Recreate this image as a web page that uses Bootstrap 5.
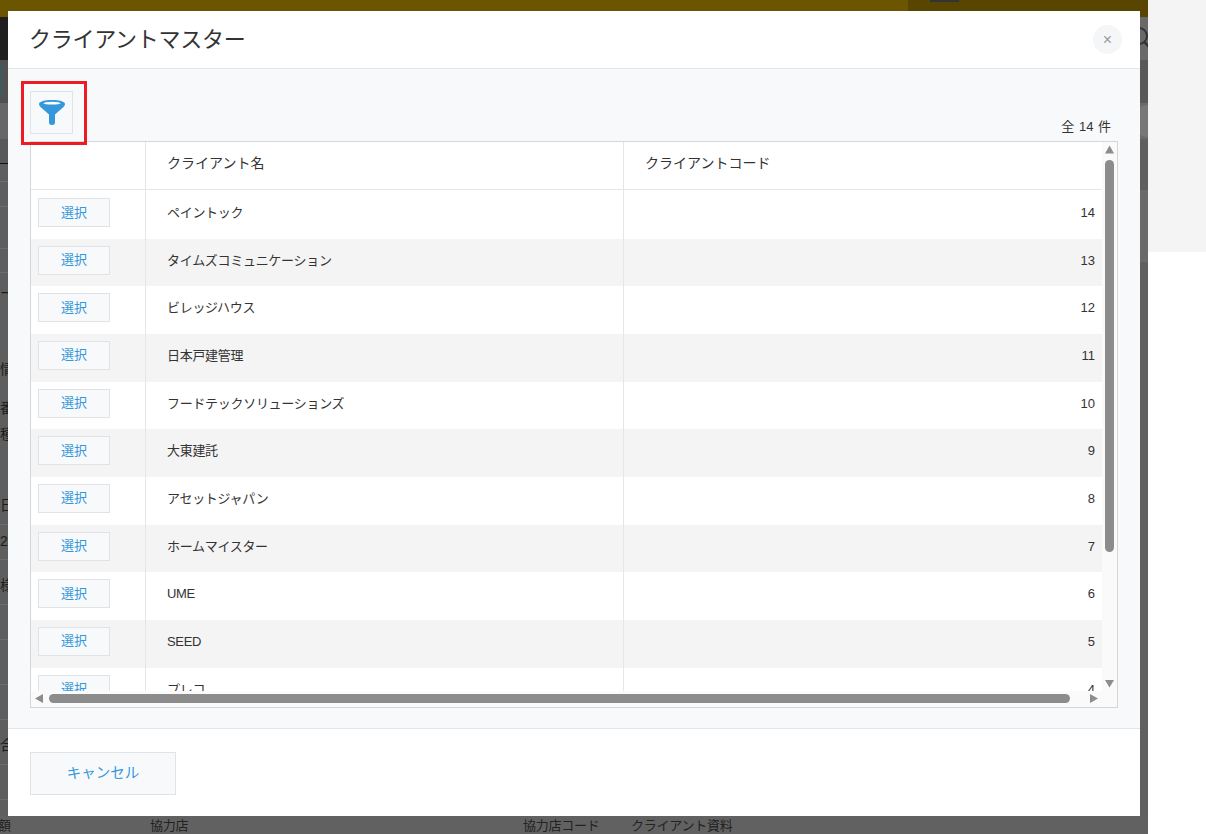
<!DOCTYPE html>
<html lang="ja">
<head>
<meta charset="utf-8">
<title>クライアントマスター</title>
<link href="https://cdn.jsdelivr.net/npm/bootstrap@5.3.0/dist/css/bootstrap.min.css" rel="stylesheet">
<style>
html,body{height:834px;overflow:hidden;background:#fff}
body{font-family:"Liberation Sans","Noto Sans CJK JP",sans-serif;font-size:13px;color:#333;position:relative}
.pg-wrap{width:1148px;height:834px}
.right-fill{position:absolute;left:1148px;top:0;width:58px;height:252px;background:#f4f4f4}
.topbar{height:17px}
.top-a{width:908px;background:#6b5500}
.top-b{background:#574500}
.top-tab{width:29px;height:2px;margin-left:22px;background:#333}
.mid{height:799px}
.lstrip,.rstrip{width:30px;overflow:hidden}
.band{color:#1c1c1c;font-size:14px;line-height:18px;white-space:nowrap}
.ln{border-bottom:1px solid #6e6e6e}
.lg{background:#5e5e5e}
.hh3{height:3px}.hh6{height:6px}.hh11{height:11px}.hh16{height:16px}.hh18{height:18px}.hh24{height:24px}.hh25{height:25px}.hh28{height:28px}.hh32{height:32px}.hh35{height:35px}.hh36{height:36px}.hh40{height:40px}.hh42{height:42px}.hh43{height:43px}.hh45{height:45px}.hh51{height:51px}.hh72{height:72px}.hh554{height:554px}
.l-dark{background:#1f1f1f}
.l-olive{background:linear-gradient(#3f5a5c,#3f5a5c) 0 5px/2px 32px no-repeat #4f5250}
.l-lite{background:#676767}
.l-mid{background:#595959}
.blk{border-bottom:1px solid #111}
.nudge{padding-top:6px}
.r-a{background:#696969}.r-b{background:#585858}.r-c{background:#6a6a6a}.r-d{background:#5f5f5f}.r-e{background:#606060}
.r-ring{width:32px;height:32px;border-radius:50%;background:#777;margin-right:-16px}
.botbar{height:18px;background:#616161;color:#222;font-size:13px;line-height:20px;white-space:nowrap;letter-spacing:-.25px}
.bt-a{width:152px;margin-left:-2px}
.bt-b{width:373px}
.bt-c{width:108px}
.mdl{position:absolute;left:8px;top:11px;width:1132px;height:805px}
.mdl .modal-content{height:100%;border:0;border-radius:0;background:#fff}
.mdl .modal-header{height:58px;padding:0 18px 0 21px;border-bottom:1px solid #e3e5e6;border-radius:0}
.ttl{font-size:22px;font-weight:400;line-height:30px;color:#333;margin:0;letter-spacing:-.25px}
.x-btn{width:29px;height:29px;border:0;border-radius:50%;background:#f5f6f8;color:#9a9a9a;font-size:16px;line-height:29px;padding:0}
.mdl .modal-body{padding:22px 22px 20px;background:#f7f9fb;flex:1 1 auto}
.tools{height:50px;position:relative}
.flt{width:43px;height:43px;padding:0;background:#f7f9fb;border:1px solid #e1e4e6;border-radius:0}
.red-box{position:absolute;left:-9px;top:-10px;width:66px;height:64px;border:3px solid #ed1c24;z-index:3;pointer-events:none}
.cnt{font-size:13px;line-height:18px;padding:0 7px 5px 0;color:#333;word-spacing:1px}
.tbl-box{width:1088px;height:567px;border:1px solid #d4d7da;background:#fafafa}
.tbl-view{width:1071px;height:549px;overflow:hidden;background:#fff}
.v-bar{width:15px;height:549px}
.h-bar{width:1071px;height:15px}
.sb-btn-v{height:18px}
.sb-btn-h{width:18px}
.v-thumb{width:9px;height:392px;margin-left:3px;background:#8c8c8c;border-radius:5px}
.h-thumb{width:1021px;height:9px;background:#8c8c8c;border-radius:5px}
.mtbl{width:1086px;table-layout:fixed;margin:0;border-collapse:separate;border-spacing:0;font-size:13px;color:#333}
.mtbl>*>*>*{padding:0;border:0;background:#fff;box-shadow:none;color:#333;vertical-align:top}
.mtbl .c1{width:115px}
.mtbl .c2,.mtbl .c3{width:478px}
.mtbl .c4{width:15px}
.mtbl thead th{height:49px;font-weight:400;font-size:14px;line-height:20px;padding:11px 0 0 21px;background:linear-gradient(#e6e6e6,#e6e6e6) left 47px/100% 1px no-repeat #fff}
.mtbl tbody td{height:47.67px;line-height:20px;padding:12px 0 0 21px;letter-spacing:-.3px}
.mtbl tbody tr:nth-child(even)>td{background:#f4f4f4}
.mtbl .c-line{border-right:1px solid #e6e6e6}
.mtbl .c-sel{padding:7px 0 0 7px!important;letter-spacing:0!important}
.mtbl .c-num{text-align:right;padding:12px 7px 0 0!important;letter-spacing:0!important}
.mtbl .c-end{padding:0!important}
.sel-btn{width:72px;height:29px;padding:0;background:#f7f9fa;border:1px solid #e1e4e6;border-radius:0;color:#3498db;font-size:13px;line-height:26px}
.mdl .modal-footer{height:88px;padding:23px 22px 0;border-top:1px solid #e3e5e6;justify-content:flex-start;align-items:flex-start;border-radius:0;background:#fff}
.cancel{width:146px;height:43px;margin:0;padding:1px 0 0;background:#f7f9fa;border:1px solid #e1e4e6;border-radius:0;color:#3498db;font-size:14.500px}
</style>
</head>
<body>
<div class="pg-wrap d-flex flex-column">
  <div class="topbar d-flex">
    <div class="top-a"></div>
    <div class="top-b flex-grow-1"><div class="top-tab"></div></div>
  </div>
  <div class="mid d-flex justify-content-between">
    <div class="lstrip">
      <div class="band hh43 l-dark"></div>
      <div class="band hh43 l-olive"></div>
      <div class="band hh36 l-lite"></div>
      <div class="band hh25 l-mid blk"></div>
      <div class="band hh18 lg ln"></div>
      <div class="band hh25 lg ln"></div>
      <div class="band hh42 lg ln"></div>
      <div class="band hh24 lg ln"></div>
      <div class="band hh40 lg d-flex align-items-center">ー</div>
      <div class="band hh42 lg"></div>
      <div class="band hh28 lg d-flex align-items-center">情報</div>
      <div class="band hh11 lg"></div>
      <div class="band hh28 lg d-flex align-items-center">番号</div>
      <div class="band hh24 lg d-flex align-items-center">種別</div>
      <div class="band hh45 lg"></div>
      <div class="band hh28 lg d-flex align-items-center">日付</div>
      <div class="band hh6 lg ln"></div>
      <div class="band hh32 lg d-flex align-items-center">2021</div>
      <div class="band hh3 lg ln"></div>
      <div class="band hh45 lg ln nudge d-flex align-items-center">様式</div>
      <div class="band hh35 lg ln"></div>
      <div class="band hh45 lg ln"></div>
      <div class="band hh35 lg ln"></div>
      <div class="band hh45 lg ln nudge d-flex align-items-center">合計</div>
      <div class="band hh35 lg ln"></div>
      <div class="band hh16 lg"></div>
    </div>
    <div class="rstrip">
      <div class="band hh43 r-a d-flex justify-content-end">
        <svg width="30" height="43" viewBox="0 0 30 43" aria-hidden="true"><circle cx="21" cy="19" r="8" fill="none" stroke="#333" stroke-width="2"/><path d="M26.500 25l4 4.500" stroke="#333" stroke-width="2.500"/></svg>
      </div>
      <div class="band hh43 r-b"></div>
      <div class="band hh36 r-c d-flex justify-content-end align-items-center"><div class="r-ring"></div></div>
      <div class="band hh51 r-d"></div>
      <div class="band hh72 r-a ln"></div>
      <div class="band hh554 r-e"></div>
    </div>
  </div>
  <div class="botbar d-flex">
    <div class="bt-a">額</div>
    <div class="bt-b">協力店</div>
    <div class="bt-c">協力店コード</div>
    <div>クライアント資料</div>
  </div>
</div>
<div class="right-fill"></div>

<div class="mdl">
  <div class="modal-content">
    <div class="modal-header d-flex justify-content-between align-items-center">
      <h5 class="ttl">クライアントマスター</h5>
      <button type="button" class="x-btn" aria-label="閉じる">×</button>
    </div>
    <div class="modal-body">
      <div class="tools d-flex justify-content-between align-items-start">
        <div class="position-relative">
          <button type="button" class="btn flt d-flex align-items-center justify-content-center" aria-label="絞り込み">
            <svg width="26" height="25" viewBox="0 0 26 25" aria-hidden="true">
              <path d="M0 4C0 1.500 6 0 13 0s13 1.500 13 4c0 1-.5 2-1.500 3L16 14.500v8a3 2.500 0 0 1-6 0v-8L1.500 7C.5 6 0 5 0 4z" fill="#3498db"/>
              <ellipse cx="13" cy="3.200" rx="8.500" ry="1.400" fill="#fff"/>
            </svg>
          </button>
          <div class="red-box"></div>
        </div>
        <div class="cnt align-self-end">全 14 件</div>
      </div>
      <div class="tbl-box d-flex flex-column">
        <div class="d-flex">
          <div class="tbl-view">
            <table class="table mtbl">
              <thead>
                <tr><th class="c1 c-line"></th><th class="c2 c-line">クライアント名</th><th class="c3">クライアントコード</th><th class="c4"></th></tr>
              </thead>
              <tbody>
                <tr><td class="c-line c-sel"><button class="btn sel-btn">選択</button></td><td class="c-line">ペイントック</td><td class="c-num">14</td><td class="c-end"></td></tr>
                <tr><td class="c-line c-sel"><button class="btn sel-btn">選択</button></td><td class="c-line">タイムズコミュニケーション</td><td class="c-num">13</td><td class="c-end"></td></tr>
                <tr><td class="c-line c-sel"><button class="btn sel-btn">選択</button></td><td class="c-line">ビレッジハウス</td><td class="c-num">12</td><td class="c-end"></td></tr>
                <tr><td class="c-line c-sel"><button class="btn sel-btn">選択</button></td><td class="c-line">日本戸建管理</td><td class="c-num">11</td><td class="c-end"></td></tr>
                <tr><td class="c-line c-sel"><button class="btn sel-btn">選択</button></td><td class="c-line">フードテックソリューションズ</td><td class="c-num">10</td><td class="c-end"></td></tr>
                <tr><td class="c-line c-sel"><button class="btn sel-btn">選択</button></td><td class="c-line">大東建託</td><td class="c-num">9</td><td class="c-end"></td></tr>
                <tr><td class="c-line c-sel"><button class="btn sel-btn">選択</button></td><td class="c-line">アセットジャパン</td><td class="c-num">8</td><td class="c-end"></td></tr>
                <tr><td class="c-line c-sel"><button class="btn sel-btn">選択</button></td><td class="c-line">ホームマイスター</td><td class="c-num">7</td><td class="c-end"></td></tr>
                <tr><td class="c-line c-sel"><button class="btn sel-btn">選択</button></td><td class="c-line">UME</td><td class="c-num">6</td><td class="c-end"></td></tr>
                <tr><td class="c-line c-sel"><button class="btn sel-btn">選択</button></td><td class="c-line">SEED</td><td class="c-num">5</td><td class="c-end"></td></tr>
                <tr><td class="c-line c-sel"><button class="btn sel-btn">選択</button></td><td class="c-line">プレコ</td><td class="c-num">4</td><td class="c-end"></td></tr>
              </tbody>
            </table>
          </div>
          <div class="v-bar d-flex flex-column">
            <svg class="sb-btn-v" width="15" height="18" viewBox="0 0 15 18" aria-hidden="true"><path d="M7.500 3.500L12 11.500H3z" fill="#8c8c8c"/></svg>
            <div class="v-thumb"></div>
            <svg class="sb-btn-v mt-auto" width="15" height="18" viewBox="0 0 15 18" aria-hidden="true"><path d="M3 7h9l-4.500 7.500z" fill="#8c8c8c"/></svg>
          </div>
        </div>
        <div class="h-bar d-flex align-items-center">
          <svg class="sb-btn-h" width="18" height="15" viewBox="0 0 18 15" aria-hidden="true"><path d="M4 7.500L12 3v9z" fill="#8c8c8c"/></svg>
          <div class="h-thumb"></div>
          <svg class="sb-btn-h ms-auto" width="18" height="15" viewBox="0 0 18 15" aria-hidden="true"><path d="M6 3l8 4.500L6 12z" fill="#8c8c8c"/></svg>
        </div>
      </div>
    </div>
    <div class="modal-footer">
      <button type="button" class="btn cancel">キャンセル</button>
    </div>
  </div>
</div>
<script src="https://cdn.jsdelivr.net/npm/bootstrap@5.3.0/dist/js/bootstrap.bundle.min.js"></script>
</body>
</html>
